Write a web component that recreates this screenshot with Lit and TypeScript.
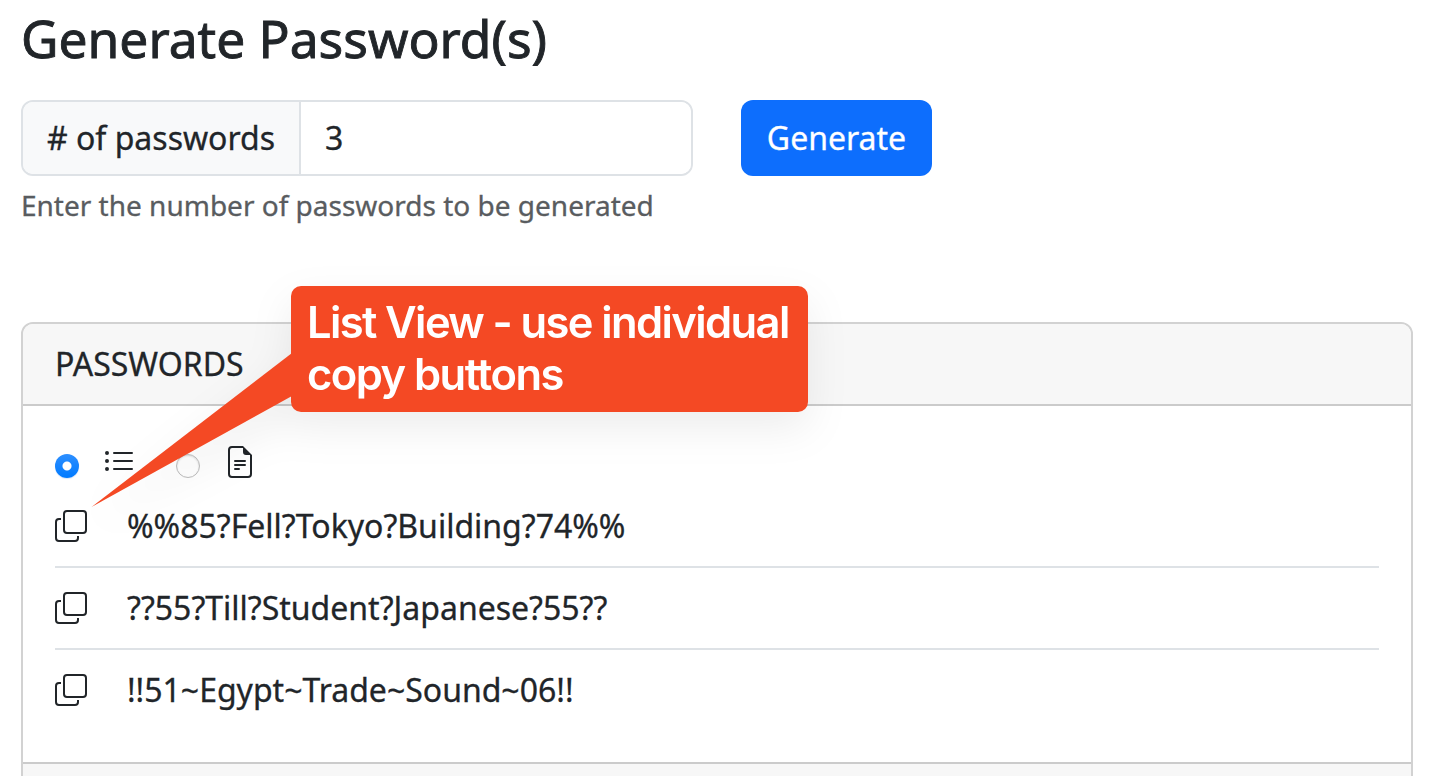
import { LitElement, html, css, svg } from "lit";
import { customElement, property, state } from "lit/decorators.js";

const ICONS = {
  list: svg`<path fill-rule="evenodd" d="M5 11.5a.5.5 0 0 1 .5-.5h9a.5.5 0 0 1 0 1h-9a.5.5 0 0 1-.5-.5m0-4a.5.5 0 0 1 .5-.5h9a.5.5 0 0 1 0 1h-9a.5.5 0 0 1-.5-.5m0-4a.5.5 0 0 1 .5-.5h9a.5.5 0 0 1 0 1h-9a.5.5 0 0 1-.5-.5m-3 1a1 1 0 1 0 0-2 1 1 0 0 0 0 2m0 4a1 1 0 1 0 0-2 1 1 0 0 0 0 2m0 4a1 1 0 1 0 0-2 1 1 0 0 0 0 2"/>`,
  file: svg`<path d="M5.5 7a.5.5 0 0 0 0 1h5a.5.5 0 0 0 0-1zM5 9.5a.5.5 0 0 1 .5-.5h5a.5.5 0 0 1 0 1h-5a.5.5 0 0 1-.5-.5m0 2a.5.5 0 0 1 .5-.5h2a.5.5 0 0 1 0 1h-2a.5.5 0 0 1-.5-.5"/><path d="M9.5 0H4a2 2 0 0 0-2 2v12a2 2 0 0 0 2 2h8a2 2 0 0 0 2-2V4.500zm0 1v2A1.500 1.500 0 0 0 11 4.500h2V14a1 1 0 0 1-1 1H4a1 1 0 0 1-1-1V2a1 1 0 0 1 1-1z"/>`,
  copy: svg`<path fill-rule="evenodd" d="M4 2a2 2 0 0 1 2-2h8a2 2 0 0 1 2 2v8a2 2 0 0 1-2 2H6a2 2 0 0 1-2-2zm2-1a1 1 0 0 0-1 1v8a1 1 0 0 0 1 1h8a1 1 0 0 0 1-1V2a1 1 0 0 0-1-1zM2 5a1 1 0 0 0-1 1v8a1 1 0 0 0 1 1h8a1 1 0 0 0 1-1v-1h1v1a2 2 0 0 1-2 2H2a2 2 0 0 1-2-2V6a2 2 0 0 1 2-2h1v1z"/>`,
};

@customElement("ui-icon")
class UiIcon extends LitElement {
  @property() name: keyof typeof ICONS = "copy";
  static styles = css`
    :host { display: block; width: 32px; height: 32px; flex: none; }
    svg { display: block; fill: #212529; }
  `;
  render() {
    return html`<svg width="32" height="32" viewBox="0 0 16 16">${ICONS[this.name]}</svg>`;
  }
}

@customElement("call-out")
class CallOut extends LitElement {
  static styles = css`
    :host {
      display: block; position: absolute; left: 91px; top: 286px;
      width: 717px; height: 222px; pointer-events: none;
      filter: drop-shadow(0 16px 20px rgba(0, 0, 0, 0.07));
    }
    .box {
      box-sizing: border-box; width: 517px; height: 126px; margin-left: 200px;
      padding: 10px 0 0 16px; border-radius: 10px; background: #f44924;
      font: 600 43.5px/52px Inter, sans-serif; color: #fff; white-space: nowrap;
      -webkit-text-stroke: 0;
    }
    .first { display: block; letter-spacing: -1.62px; }
    .second { display: block; letter-spacing: -1.55px; }
    .tail { position: absolute; left: 0; top: 0; fill: #f44924; }
  `;
  render() {
    return html`
      <svg class="tail" width="210" height="222"><path d="M0.500 221L201 67V110Z"/></svg>
      <div class="box">
        <span class="first">List View - use individual</span>
        <span class="second">copy buttons</span>
      </div>`;
  }
}

@customElement("app-root")
class AppRoot extends LitElement {
  @state() passwords = [
    "%%85?Fell?Tokyo?Building?74%%",
    "??55?Till?Student?Japanese?55??",
    "!!51~Egypt~Trade~Sound~06!!",
  ];

  static styles = css`
    :host {
      display: block; position: relative; box-sizing: border-box;
      height: 776px; overflow: hidden; padding: 6px 25px 0 21px;
      background: #fff; color: #212529;
      font: 400 32px/48px "Noto Sans", sans-serif;
      -webkit-text-stroke: 0.3px;
    }
    * { box-sizing: border-box; }
    h1 { margin: 0 0 30px; font-size: 51.5px; font-weight: 400; line-height: 64px; white-space: nowrap; -webkit-text-stroke: 0.9px; }
    .form { display: flex; gap: 48px; height: 76px; }
    .group { display: flex; width: 672px; border: 2px solid #dee2e6; border-radius: 12px; overflow: hidden; }
    .label { width: 278px; padding: 12px 0 0 24px; background: #f8f9fa; border-right: 2px solid #dee2e6; white-space: nowrap; }
    input { flex: 1; min-width: 0; border: 0; outline: 0; padding: 0 24px; font: inherit; color: inherit; background: #fff; }
    button.generate { width: 191px; border: 0; border-radius: 12px; padding: 0; background: #0d6efd; color: #fff; font: inherit; }
    .help { margin-top: 8px; height: 42px; font-size: 28px; line-height: 42px; color: #595c5f; white-space: nowrap; }
    .card { margin-top: 96px; border: 2px solid #d2d2d2; border-radius: 12px; overflow: hidden; height: 520px; }
    .head { height: 82px; padding: 16px 32px; background: #f7f7f7; border-bottom: 2px solid #cbcbcb; }
    .body { padding: 32px; }
    .views { display: flex; height: 48px; padding-top: 8px; }
    .radio { flex: none; width: 24px; height: 24px; margin-top: 8px; border-radius: 50%; border: 1px solid #bdbdbd; background: #fff; box-shadow: inset 0 1px 2px rgba(0, 0, 0, 0.14); }
    .radio.on { border: 0; background: radial-gradient(circle, #fff 4px, transparent 5px), linear-gradient(#2d8fff, #007aff); box-shadow: 0 1px 1px rgba(0, 80, 200, 0.15); }
    .view { display: flex; gap: 24px; width: 121px; }
    .view + .view { gap: 23.5px; }
    .row { display: flex; align-items: center; gap: 40px; height: 82px; border-bottom: 2px solid #dee2e6; white-space: nowrap; }
    .row:last-child { height: 80px; border: 0; }
    .foot { height: 40px; background: #f7f7f7; border-top: 2px solid #cbcbcb; }
  `;

  render() {
    return html`
      <h1>Generate Password(s)</h1>
      <div class="form">
        <div class="group">
          <span class="label"># of passwords</span>
          <input type="text" value="3" />
        </div>
        <button class="generate">Generate</button>
      </div>
      <div class="help">Enter the number of passwords to be generated</div>
      <section class="card">
        <div class="head">PASSWORDS</div>
        <div class="body">
          <div class="views">
            <div class="view"><span class="radio on"></span><ui-icon name="list"></ui-icon></div>
            <div class="view"><span class="radio"></span><ui-icon name="file"></ui-icon></div>
          </div>
          ${this.passwords.map((p) => html`<div class="row"><ui-icon name="copy"></ui-icon><span>${p}</span></div>`)}
        </div>
        <div class="foot"></div>
      </section>
      <call-out></call-out>`;
  }
}
